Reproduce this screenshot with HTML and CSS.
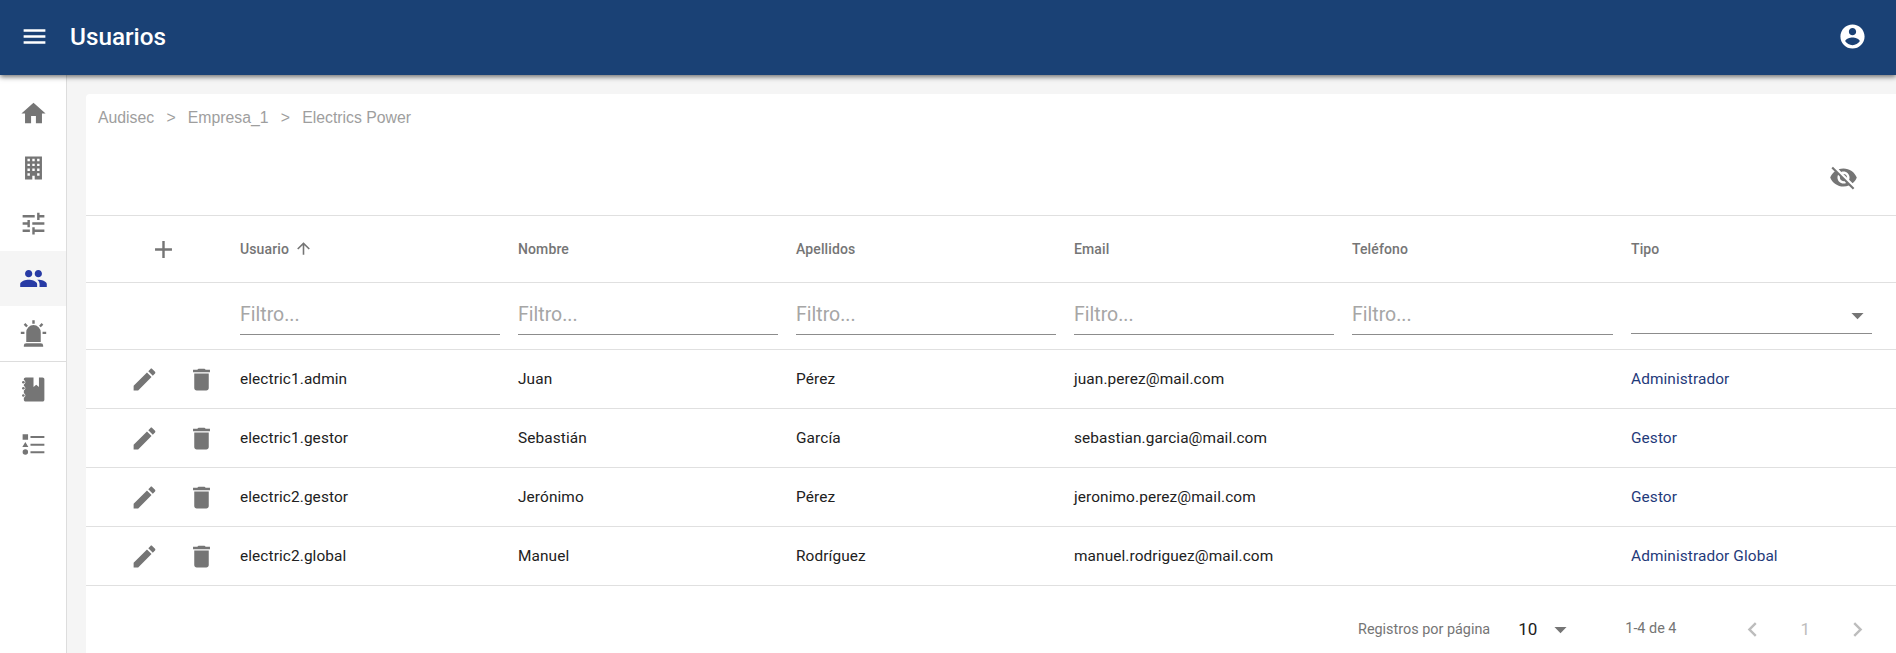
FILE: index.html
```html
<!DOCTYPE html>
<html lang="es">
<head>
<meta charset="utf-8">
<title>Usuarios</title>
<link rel="stylesheet" href="styles.css">
</head>
<body>
<header class="appbar">
  <svg class="icon appbar-menu" viewBox="0 0 24 24"><path d="M3 18h18v-2H3v2zm0-5h18v-2H3v2zm0-7v2h18V6H3z"/></svg>
  <h1 class="appbar-title">Usuarios</h1>
  <svg class="icon appbar-user" viewBox="0 0 24 24"><path d="M12 2C6.48 2 2 6.48 2 12s4.48 10 10 10 10-4.48 10-10S17.52 2 12 2zm0 3c1.66 0 3 1.34 3 3s-1.34 3-3 3-3-1.34-3-3 1.34-3 3-3zm0 14.2c-2.5 0-4.71-1.28-6-3.22.03-1.99 4-3.08 6-3.08 1.99 0 5.97 1.09 6 3.08-1.29 1.94-3.5 3.22-6 3.22z"/></svg>
</header>
<div class="shell">
  <nav class="sidebar">
    <div class="nav-item"><svg class="icon" viewBox="0 0 24 24"><path d="M10 20v-6h4v6h5v-8h3L12 3 2 12h3v8z"/></svg></div>
    <div class="nav-item"><svg class="icon" viewBox="0 0 24 24"><path fill-rule="evenodd" d="M5 2h14v19h-6v-3h-2v3H5zM7 4v2h2V4zm4 0v2h2V4zm4 0v2h2V4zM7 8v2h2V8zm4 0v2h2V8zm4 0v2h2V8zM7 12v2h2v-2zm4 0v2h2v-2zm4 0v2h2v-2zM7 16v2h2v-2zm8 0v2h2v-2z"/></svg></div>
    <div class="nav-item"><svg class="icon" viewBox="0 0 24 24"><path d="M3 17v2h6v-2H3zM3 5v2h10V5H3zm10 16v-2h8v-2h-8v-2h-2v6h2zM7 9v2H3v2h4v2h2V9H7zm14 4v-2H11v2h10zm-6-4h2V7h4V5h-4V3h-2v6z"/></svg></div>
    <div class="nav-item nav-item-active"><svg class="icon" viewBox="0 0 24 24"><path d="M16 11c1.66 0 2.99-1.34 2.99-3S17.66 5 16 5c-1.66 0-3 1.34-3 3s1.34 3 3 3zm-8 0c1.66 0 2.99-1.34 2.99-3S9.66 5 8 5C6.34 5 5 6.34 5 8s1.34 3 3 3zm0 2c-2.33 0-7 1.17-7 3.5V19h14v-2.5c0-2.33-4.67-3.5-7-3.5zm8 0c-.29 0-.62.02-.97.05 1.16.84 1.97 1.97 1.97 3.45V19h6v-2.5c0-2.33-4.67-3.5-7-3.5z"/></svg></div>
    <div class="nav-item"><svg class="icon" viewBox="0 0 24 24"><path d="M6 6.9L3.87 4.78 5.28 3.37 7.4 5.5 6 6.9M13 1v3h-2V1h2m7.13 3.78L18 6.9 16.6 5.5l2.12-2.13 1.41 1.41M4.5 10.5v2h-3v-2h3m15 0h3v2h-3v-2M6 20h12a2 2 0 0 1 2 2v1H4v-1a2 2 0 0 1 2-2m6-15a6 6 0 0 1 6 6v8H6v-8a6 6 0 0 1 6-6z"/></svg></div>
    <div class="nav-divider"></div>
    <div class="nav-item"><svg class="icon" viewBox="0 0 24 24"><path fill-rule="evenodd" d="M5.500 2H12v8l2.250-2 2.250 2V2h3c.8 0 1.500.7 1.500 1.500v17c0 .8-.7 1.500-1.500 1.500h-14c-.8 0-1.500-.7-1.500-1.500v-1.700a1.900 1.900 0 0 0 0-3.600v-2.400a1.900 1.900 0 0 0 0-3.600V7.800a1.900 1.900 0 0 0 0-3.600V3.500C4 2.700 4.700 2 5.500 2z"/><circle cx="3.600" cy="6" r="1.100"/><circle cx="3.600" cy="11" r="1.100"/><circle cx="3.600" cy="17" r="1.100"/></svg></div>
    <div class="nav-item"><svg class="icon" viewBox="0 0 24 24"><path d="M3 3.500h4.500V8H3zM5.250 10l2.500 4H2.750zM5.250 16a2.250 2.250 0 1 1 0 4.500 2.250 2.250 0 0 1 0-4.500zM9.500 5h11.500v1.700H9.500zM9.500 11.300h11.500V13H9.500zM9.500 17.500h11.500v1.700H9.500z"/></svg></div>
  </nav>
  <main class="content">
    <section class="card">
      <div class="crumbs"><span>Audisec</span><span>&gt;</span><span>Empresa_1</span><span>&gt;</span><span>Electrics Power</span></div>
      <div class="toolbar">
        <svg class="icon" viewBox="0 0 24 24"><path d="M12 7c2.76 0 5 2.24 5 5 0 .65-.13 1.26-.36 1.83l2.92 2.92c1.51-1.26 2.7-2.89 3.43-4.75-1.73-4.39-6-7.5-11-7.5-1.4 0-2.74.25-3.98.7l2.16 2.16C10.74 7.13 11.35 7 12 7zM2 4.270l2.280 2.280.46.46C3.080 8.300 1.780 10.020 1 12c1.730 4.390 6 7.500 11 7.500 1.550 0 3.030-.3 4.380-.84l.42.42L19.730 22 21 20.730 3.270 3 2 4.270zM7.530 9.800l1.550 1.550c-.05.21-.08.43-.08.65 0 1.660 1.340 3 3 3 .22 0 .44-.03.65-.08l1.550 1.550c-.67.33-1.410.53-2.200.53-2.760 0-5-2.240-5-5 0-.79.2-1.530.53-2.200zm4.310-.78l3.150 3.150.02-.16c0-1.660-1.340-3-3-3l-.17.01z"/></svg>
      </div>
      <div class="row row-head">
        <div class="cell-actions cell-add"><svg class="icon" viewBox="0 0 24 24"><path d="M19 13h-6v6h-2v-6H5v-2h6V5h2v6h6v2z"/></svg></div>
        <div class="head-cell">Usuario <svg class="icon icon-sort" viewBox="0 0 24 24"><path d="M4 12l1.410 1.410L11 7.830V20h2V7.830l5.580 5.590L20 12l-8-8-8 8z"/></svg></div>
        <div class="head-cell">Nombre</div>
        <div class="head-cell">Apellidos</div>
        <div class="head-cell">Email</div>
        <div class="head-cell">Teléfono</div>
        <div class="head-cell">Tipo</div>
      </div>
      <div class="row row-filter">
        <div></div>
        <div class="filter">Filtro...</div>
        <div class="filter">Filtro...</div>
        <div class="filter">Filtro...</div>
        <div class="filter">Filtro...</div>
        <div class="filter">Filtro...</div>
        <div class="filter filter-select"><svg class="icon" viewBox="0 0 24 24"><path d="M7 10l5 5 5-5z"/></svg></div>
      </div>
      <div class="row row-body">
        <div class="cell-actions"><svg class="icon" viewBox="0 0 24 24"><path d="M3 17.250V21h3.750L17.810 9.940l-3.750-3.750L3 17.250zM20.710 7.040c.39-.39.39-1.020 0-1.410l-2.340-2.340c-.39-.39-1.020-.39-1.410 0l-1.830 1.830 3.750 3.750 1.830-1.830z"/></svg><svg class="icon" viewBox="0 0 24 24"><path d="M6 19c0 1.100.9 2 2 2h8c1.100 0 2-.9 2-2V7H6v12zM19 4h-3.500l-1-1h-5l-1 1H5v2h14V4z"/></svg></div>
        <div>electric1.admin</div><div>Juan</div><div>Pérez</div><div>juan.perez@mail.com</div><div></div><div class="type">Administrador</div>
      </div>
      <div class="row row-body">
        <div class="cell-actions"><svg class="icon" viewBox="0 0 24 24"><path d="M3 17.250V21h3.750L17.810 9.940l-3.750-3.750L3 17.250zM20.710 7.040c.39-.39.39-1.020 0-1.410l-2.340-2.340c-.39-.39-1.020-.39-1.410 0l-1.830 1.830 3.750 3.750 1.830-1.830z"/></svg><svg class="icon" viewBox="0 0 24 24"><path d="M6 19c0 1.100.9 2 2 2h8c1.100 0 2-.9 2-2V7H6v12zM19 4h-3.500l-1-1h-5l-1 1H5v2h14V4z"/></svg></div>
        <div>electric1.gestor</div><div>Sebastián</div><div>García</div><div>sebastian.garcia@mail.com</div><div></div><div class="type">Gestor</div>
      </div>
      <div class="row row-body">
        <div class="cell-actions"><svg class="icon" viewBox="0 0 24 24"><path d="M3 17.250V21h3.750L17.810 9.940l-3.750-3.750L3 17.250zM20.710 7.040c.39-.39.39-1.020 0-1.410l-2.340-2.340c-.39-.39-1.020-.39-1.410 0l-1.830 1.830 3.750 3.750 1.830-1.830z"/></svg><svg class="icon" viewBox="0 0 24 24"><path d="M6 19c0 1.100.9 2 2 2h8c1.100 0 2-.9 2-2V7H6v12zM19 4h-3.500l-1-1h-5l-1 1H5v2h14V4z"/></svg></div>
        <div>electric2.gestor</div><div>Jerónimo</div><div>Pérez</div><div>jeronimo.perez@mail.com</div><div></div><div class="type">Gestor</div>
      </div>
      <div class="row row-body">
        <div class="cell-actions"><svg class="icon" viewBox="0 0 24 24"><path d="M3 17.250V21h3.750L17.810 9.940l-3.750-3.750L3 17.250zM20.710 7.040c.39-.39.39-1.020 0-1.410l-2.340-2.340c-.39-.39-1.020-.39-1.410 0l-1.830 1.830 3.750 3.750 1.830-1.830z"/></svg><svg class="icon" viewBox="0 0 24 24"><path d="M6 19c0 1.100.9 2 2 2h8c1.100 0 2-.9 2-2V7H6v12zM19 4h-3.500l-1-1h-5l-1 1H5v2h14V4z"/></svg></div>
        <div>electric2.global</div><div>Manuel</div><div>Rodríguez</div><div>manuel.rodriguez@mail.com</div><div></div><div class="type">Administrador Global</div>
      </div>
      <footer class="pager">
        <span class="pager-label">Registros por página</span>
        <span class="pager-size">10</span>
        <svg class="icon pager-drop" viewBox="0 0 24 24"><path d="M7 10l5 5 5-5z"/></svg>
        <span class="pager-range">1-4 de 4</span>
        <svg class="icon pager-nav" viewBox="0 0 24 24"><path d="M15.410 7.410L14 6l-6 6 6 6 1.410-1.410L10.830 12z"/></svg>
        <span class="pager-page">1</span>
        <svg class="icon pager-nav" viewBox="0 0 24 24"><path d="M10 6L8.590 7.410 13.170 12l-4.580 4.590L10 18l6-6z"/></svg>
      </footer>
    </section>
  </main>
</div>
</body>
</html>
```
FILE: styles.css
```css
* { box-sizing: border-box; }
html, body { margin: 0; height: 653px; overflow: hidden; }
body { font-family: Roboto, "Liberation Sans", sans-serif; background: #f5f5f5; color: #212121; }
.icon { width: 29px; height: 29px; fill: currentColor; flex: none; display: block; }

.appbar { position: relative; z-index: 2; height: 75px; display: flex; align-items: center; padding: 0 29px 3px 20px; background: #1a4175; color: #fff; box-shadow: 0 2px 5px rgba(0,0,0,.55); }
.appbar-title { margin: 0 0 0 21px; font-size: 24.3px; font-weight: 500; flex: 1; }

.shell { display: flex; height: 578px; }
.sidebar { width: 67px; flex: none; background: #fff; border-right: 1px solid #ddd; padding-top: 11px; color: #757575; }
.nav-item { height: 55px; display: flex; align-items: center; justify-content: center; }
.nav-item-active { background: #f5f5f5; color: #283ba5; }
.nav-divider { height: 1px; background: #ddd; }

.content { flex: 1; padding: 19px 0 0 19px; min-width: 0; }
.card { background: #fff; border-radius: 4px 0 0 0; height: 100%; }

.crumbs { height: 46px; padding: 13px 0 0 12px; display: flex; gap: 12.2px; font: 15.8px/22px "Liberation Sans", Arial, sans-serif; color: #9e9e9e; }
.toolbar { height: 76px; padding: 23px 38px 0 0; display: flex; justify-content: flex-end; color: #757575; border-bottom: 1px solid #e0e0e0; }

.row { display: grid; grid-template-columns: 154px 278px 278px 278px 278px 279px 1fr; align-items: center; border-bottom: 1px solid #e0e0e0; }
.row-head { height: 67px; font-size: 14px; letter-spacing: .12px; font-weight: 500; color: #757575; }
.head-cell { display: flex; align-items: center; gap: 5px; padding-bottom: 1px; }
.icon-sort { width: 19px; height: 19px; }
.cell-actions { display: flex; padding-left: 44px; gap: 28px; color: #757575; }
.cell-add { padding-left: 63px; }

.row-filter { height: 67px; }
.filter { align-self: start; height: 38px; margin: 14px 18px 0 0; border-bottom: 1px solid #8c8c8c; font-size: 19.5px; line-height: 36px; color: #a6a6a6; }
.filter-select { margin-right: 24px; display: flex; justify-content: flex-end; color: #757575; padding-top: 4px; height: 37px; }

.row-body { height: 59px; font-size: 15.4px; letter-spacing: .1px; color: #212121; }
.type { color: #1f3a7a; }

.pager { display: flex; align-items: center; height: 68px; padding: 18px 24px 0 0; justify-content: flex-end; font-size: 14.4px; color: #757575; }
.pager-size { margin-left: 28px; font-size: 17px; color: #212121; }
.pager-drop { margin-left: 9px; }
.pager-range { margin: 0 62px 0 50px; position: relative; top: -1px; }
.pager-nav { color: #bdbdbd; }
.pager-page { margin: 0 33px; font-size: 17px; color: #bdbdbd; }
```
